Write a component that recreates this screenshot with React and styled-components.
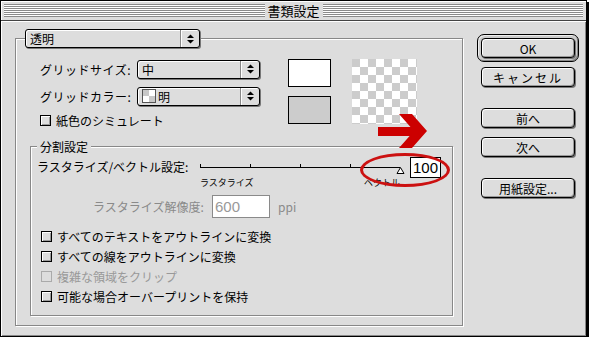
import styled, { createGlobalStyle } from "styled-components";

const FONT = `"Noto Sans CJK JP", "Noto Sans", sans-serif`;

const GlobalStyle = createGlobalStyle`
  html, body {
    margin: 0;
    padding: 0;
    background: #fff;
  }
  body {
    font-family: ${FONT};
    font-size: 12px;
    color: #000;
  }
`;

const Window = styled.div`
  position: relative;
  width: 587px;
  height: 337px;
  box-sizing: border-box;
  border: 1px solid #000;
  box-shadow: 2px 2px 0 #000;
  background: #ddd;
  font-family: ${FONT};
  font-size: 12px;
  display: flex;
  flex-direction: column;
`;

const TitleBar = styled.div`
  height: 19px;
  border-bottom: 1px solid #444;
  display: flex;
  align-items: center;
  padding: 0 3px;
  box-shadow: inset 1px 1px 0 #fff;
`;

const Stripes = styled.div`
  flex: 1;
  height: 13px;
  background: repeating-linear-gradient(
    to bottom,
    #8a8a8a 0 1px,
    #fff 1px 2px
  );
`;

const Title = styled.div`
  padding: 0 3px;
  font-size: 13px;
  line-height: 19px;
`;

const Main = styled.div`
  flex: 1;
  display: flex;
  align-items: flex-start;
  gap: 14px;
  padding: 13px 0 0 14px;
  box-shadow: inset 1px 1px 0 #fff, inset -1px -1px 0 #888;
`;

const GroupBox = styled.div`
  box-sizing: border-box;
  width: ${(p) => p.$w}px;
  height: ${(p) => p.$h}px;
  margin: ${(p) => p.$m || 0};
  border: 1px solid #888;
  box-shadow: 1px 1px 0 #fff, inset 1px 1px 0 #fff;
  display: flex;
  flex-direction: column;
`;

const HeaderPopup = styled.div`
  margin: -10px 0 0 9px;
`;

const Popup = styled.div`
  width: ${(p) => p.$w}px;
  height: 19px;
  box-sizing: border-box;
  border: 1px solid #000;
  border-radius: 3px;
  background: #ddd;
  box-shadow: 1px 1px 0 #777, inset 1px 1px 0 #fff;
  display: flex;
  align-items: center;
`;

const PopupText = styled.div`
  flex: 1;
  display: flex;
  align-items: center;
  gap: 2px;
  padding-left: ${(p) => p.$pad || 4}px;
  line-height: 17px;
  font-size: 12px;
`;

const PopupArrows = styled.div`
  width: 18px;
  align-self: stretch;
  border-left: 1px solid #888;
  box-shadow: inset 1px 0 0 #fff;
  display: flex;
  align-items: center;
  justify-content: center;
`;

const MiniChecker = styled.span`
  display: inline-block;
  width: 14px;
  height: 14px;
  box-sizing: border-box;
  border: 1px solid #555;
  background: repeating-conic-gradient(#fff 0 25%, #c8c8c8 0 50%) 0 0 / 12px
    12px;
`;

const UpperSection = styled.div`
  display: flex;
  align-items: flex-start;
  height: 65px;
  margin-top: 11px;
  padding-left: 24px;
`;

const Form = styled.div`
  width: 248px;
  display: flex;
  flex-direction: column;
`;

const FormRow = styled.div`
  display: flex;
  align-items: center;
  height: 20px;
  margin-top: ${(p) => p.$mt || 0}px;
`;

const FieldLabel = styled.div`
  width: 97px;
  white-space: nowrap;
  letter-spacing: 0.5px;
`;

const Swatches = styled.div`
  display: flex;
  flex-direction: column;
  gap: 9px;
`;

const Swatch = styled.div`
  width: 43px;
  height: 28px;
  box-sizing: border-box;
  border: 1px solid #000;
  background: ${(p) => p.$bg};
`;

const Checker = styled.div`
  width: 65px;
  height: 65px;
  margin-left: 21px;
  background: repeating-conic-gradient(#fff 0 25%, #cccccc 0 50%) 0 0 / 16px
    16px;
`;

const Legend = styled.div`
  align-self: flex-start;
  margin: -8px 0 0 6px;
  padding: 0 3px;
  background: #ddd;
  line-height: 16px;
`;

const SliderRow = styled.div`
  display: flex;
  align-items: flex-start;
  margin-top: 2px;
  padding-left: 6px;
`;

const SliderLabel = styled.div`
  width: 163px;
  line-height: 20px;
  white-space: nowrap;
`;

const Slider = styled.div`
  width: 206px;
  display: flex;
  flex-direction: column;
`;

const SliderCaptions = styled.div`
  display: flex;
  justify-content: space-between;
  padding-right: 6px;
  font-size: 9px;
  line-height: 12px;
`;

const NumField = styled.div`
  box-sizing: border-box;
  width: ${(p) => p.$w}px;
  height: ${(p) => p.$h}px;
  margin-left: ${(p) => p.$ml || 0}px;
  border: 1px solid ${(p) => (p.$disabled ? "#8a8a8a" : "#000")};
  background: #fff;
  color: ${(p) => (p.$disabled ? "#999" : "#000")};
  font-family: "Liberation Sans", Arial, sans-serif;
  font-size: 15px;
  line-height: ${(p) => p.$h - 2}px;
  text-align: ${(p) => p.$align || "left"};
  padding: 0 3px 0 2px;
`;

const ResRow = styled.div`
  display: flex;
  align-items: center;
  height: 23px;
  margin-top: 6px;
  padding-left: 62px;
  color: #8a8a8a;
`;

const ResLabel = styled.div`
  width: 119px;
  white-space: nowrap;
`;

const Unit = styled.div`
  margin-left: 8px;
  font-size: 12px;
`;

const CheckList = styled.div`
  display: flex;
  flex-direction: column;
  margin-top: 8px;
  padding-left: 10px;
`;

const CheckRow = styled.div`
  display: flex;
  align-items: center;
  height: 20px;
  color: ${(p) => (p.$disabled ? "#999" : "#000")};
  white-space: nowrap;
`;

const Box = styled.span`
  width: 11px;
  height: 11px;
  box-sizing: border-box;
  border: 1px solid ${(p) => (p.$disabled ? "#aaa" : "#000")};
  background: #ddd;
  box-shadow: ${(p) =>
    p.$disabled ? "none" : "inset 1px 1px 0 #fff, inset -1px -1px 0 #999"};
  margin-right: 5px;
  flex: none;
`;

const ButtonColumn = styled.div`
  width: 102px;
  display: flex;
  flex-direction: column;
`;

const DefaultRing = styled.div`
  border: 1px solid #000;
  border-radius: 7px;
  padding: 3px;
  background: #ccc;
  box-shadow: inset 1px 1px 0 #eee, inset -1px -1px 0 #888;
`;

const Button = styled.div`
  height: 20px;
  box-sizing: border-box;
  margin: ${(p) => (p.$inRing ? "0" : `${p.$mt || 0}px 4px 0 4px`)};
  border: 1px solid #000;
  border-radius: 4px;
  background: #ddd;
  box-shadow: inset 1px 1px 0 #fff, inset -1px -1px 0 #999,
    1px 1px 0 #777;
  display: flex;
  align-items: center;
  justify-content: center;
  font-size: 12px;
  letter-spacing: ${(p) => p.$ls || 0}px;
`;

const Ellipse = styled.div`
  position: absolute;
  left: 359px;
  top: 152px;
  width: 90px;
  height: 34px;
  box-sizing: border-box;
  border: 3px solid #cc1111;
  border-radius: 50%;
  pointer-events: none;
`;

const ArrowSvg = styled.svg`
  position: absolute;
  left: 375px;
  top: 111px;
  pointer-events: none;
`;

const UpDown = () => (
  <svg width="7" height="10" viewBox="0 0 7 10">
    <path d="M0 4 L3.5 0.5 L7 4 Z" fill="#000" />
    <path d="M0 6 L3.5 9.5 L7 6 Z" fill="#000" />
  </svg>
);

const SelectBox = ({ width, children }) => (
  <Popup $w={width}>
    <PopupText>{children}</PopupText>
    <PopupArrows>
      <UpDown />
    </PopupArrows>
  </Popup>
);

const SliderTrack = () => (
  <svg width="206" height="20" viewBox="0 0 206 20">
    <line x1="0" y1="10.5" x2="200" y2="10.5" stroke="#000" />
    {[0.5, 50.5, 100.5, 150.5].map((x) => (
      <line key={x} x1={x} y1="7" x2={x} y2="10" stroke="#000" />
    ))}
    <path d="M200.5 10.5 L204 16.5 L197 16.5 Z" fill="#fff" stroke="#000" />
  </svg>
);

const options = [
  { label: "すべてのテキストをアウトラインに変換" },
  { label: "すべての線をアウトラインに変換" },
  { label: "複雑な領域をクリップ", disabled: true },
  { label: "可能な場合オーバープリントを保持" },
];

export default function App() {
  return (
    <>
      <GlobalStyle />
      <Window>
        <TitleBar>
          <Stripes />
          <Title>書類設定</Title>
          <Stripes />
        </TitleBar>
        <Main>
          <GroupBox $w={448} $h={288} $m="4px 0 0 0">
            <HeaderPopup>
              <SelectBox width={175}>透明</SelectBox>
            </HeaderPopup>
            <UpperSection>
              <Form>
                <FormRow>
                  <FieldLabel>グリッドサイズ:</FieldLabel>
                  <SelectBox width={123}>中</SelectBox>
                </FormRow>
                <FormRow $mt={7}>
                  <FieldLabel>グリッドカラー:</FieldLabel>
                  <SelectBox width={123}>
                    <MiniChecker />明
                  </SelectBox>
                </FormRow>
                <FormRow $mt={4}>
                  <Box />
                  紙色のシミュレート
                </FormRow>
              </Form>
              <Swatches>
                <Swatch $bg="#fff" />
                <Swatch $bg="#cccccc" />
              </Swatches>
              <Checker />
            </UpperSection>
            <GroupBox $w={423} $h={170} $m="22px 0 0 14px">
              <Legend>分割設定</Legend>
              <SliderRow>
                <SliderLabel>ラスタライズ/ベクトル設定:</SliderLabel>
                <Slider>
                  <SliderTrack />
                  <SliderCaptions>
                    <span>ラスタライズ</span>
                    <span>ベクトル</span>
                  </SliderCaptions>
                </Slider>
                <NumField $w={31} $h={21} $ml={4} $align="right">
                  100
                </NumField>
              </SliderRow>
              <ResRow>
                <ResLabel>ラスタライズ解像度:</ResLabel>
                <NumField $w={58} $h={23} $disabled>
                  600
                </NumField>
                <Unit>ppi</Unit>
              </ResRow>
              <CheckList>
                {options.map((o) => (
                  <CheckRow key={o.label} $disabled={o.disabled}>
                    <Box $disabled={o.disabled} />
                    {o.label}
                  </CheckRow>
                ))}
              </CheckList>
            </GroupBox>
          </GroupBox>
          <ButtonColumn>
            <DefaultRing>
              <Button $inRing>OK</Button>
            </DefaultRing>
            <Button $mt={5} $ls={2}>
              キャンセル
            </Button>
            <Button $mt={21}>前へ</Button>
            <Button $mt={9}>次へ</Button>
            <Button $mt={21}>用紙設定...</Button>
          </ButtonColumn>
        </Main>
        <ArrowSvg width="54" height="40" viewBox="375 111 54 40">
          <path
            d="M377 126 L409.5 126 L398 113 L411 113 L426 130 L411 147 L398 147 L408.6 135 L377 135 Z"
            fill="#cc0000"
          />
        </ArrowSvg>
        <Ellipse />
      </Window>
    </>
  );
}
